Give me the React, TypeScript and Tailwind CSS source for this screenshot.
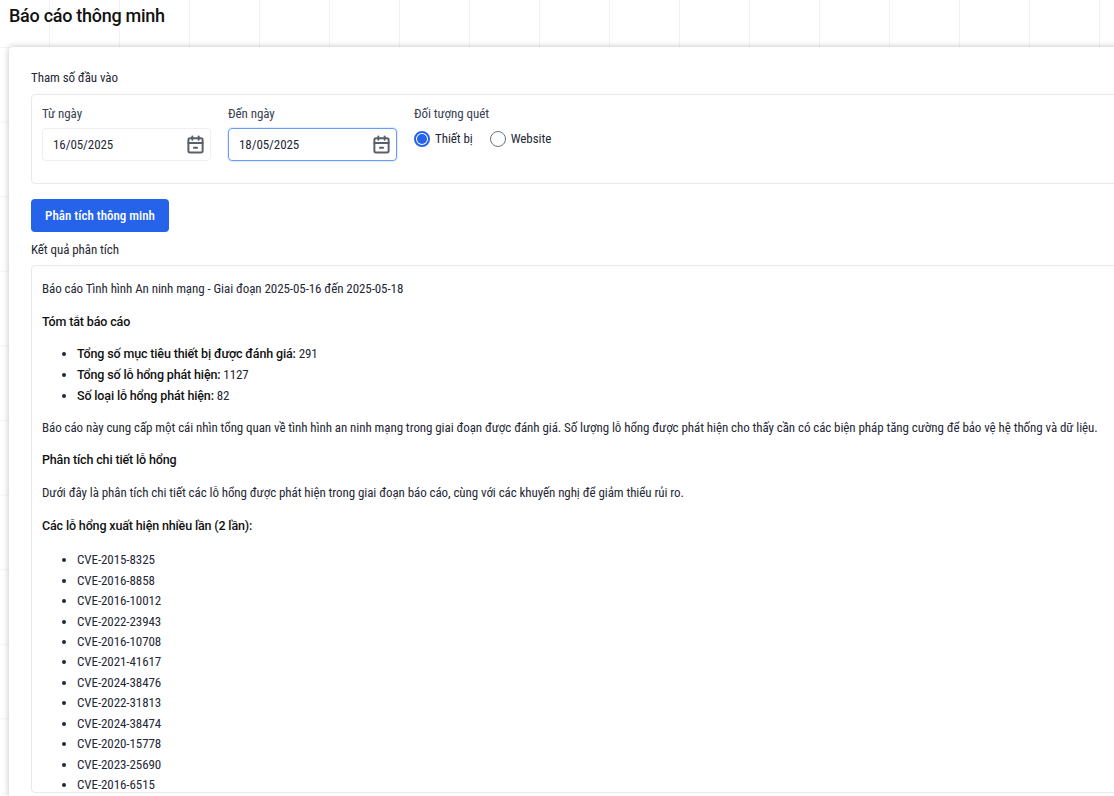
import { CalendarMinus2 } from "lucide-react"

const cves = [
  "CVE-2015-8325",
  "CVE-2016-8858",
  "CVE-2016-10012",
  "CVE-2022-23943",
  "CVE-2016-10708",
  "CVE-2021-41617",
  "CVE-2024-38476",
  "CVE-2022-31813",
  "CVE-2024-38474",
  "CVE-2020-15778",
  "CVE-2023-25690",
  "CVE-2016-6515",
]

function DateField({ label, value, focused }: { label: string; value: string; focused?: boolean }) {
  return (
    <div className="w-[169px]">
      <div className="h-[20px] leading-[20px] text-[#374151]">{label}</div>
      <div
        className={`mt-[4px] flex h-[33px] items-center justify-between rounded-[4px] border pl-[10px] pr-[5px] text-[#1f2937] ${
          focused ? "border-[#6b9cf5] shadow-[0_0_0_1px_rgba(147,184,250,0.25)]" : "border-[#eceef1]"
        }`}
      >
        <span>{value}</span>
        <CalendarMinus2 size={19} strokeWidth={2.5} className="text-[#5b6068]" />
      </div>
    </div>
  )
}

function Radio({ label, checked }: { label: string; checked?: boolean }) {
  return (
    <label className="flex items-center gap-[5px] text-[#1f2937]">
      {checked ? (
        <span className="flex h-[16px] w-[16px] items-center justify-center rounded-full border-[2px] border-[#2563eb]">
          <span className="h-[10px] w-[10px] rounded-full bg-[#2563eb]" />
        </span>
      ) : (
        <span className="h-[16px] w-[16px] rounded-full border-[1.5px] border-[#6b7280]" />
      )}
      {label}
    </label>
  )
}

function Strong({ children }: { children: string }) {
  return <strong className="text-[12.5px] font-medium tracking-[-0.15px] text-[#111] [font-stretch:100%]">{children}</strong>
}

export default function App() {
  return (
    <div className="flex h-screen flex-col overflow-hidden bg-white bg-[linear-gradient(to_right,#f1f2f4_1px,transparent_1px),linear-gradient(to_bottom,#f5f5f6_1px,transparent_1px)] bg-[length:70px_74.6px] bg-[position:49px_47px] font-['Roboto',sans-serif] text-[13px] tracking-[-0.08px] text-[#111827] [font-stretch:87.5%]">
      <h1 className="h-[47px] pl-[9px] pt-[3px] text-[18px] font-medium leading-[26px] tracking-[-0.28px] text-[#111] [font-stretch:100%]">
        Báo cáo thông minh
      </h1>
      <div className="ml-[9px] flex min-h-0 w-[1140px] flex-1 flex-col rounded-tl-[4px] bg-white pb-[3px] pl-[22px] pr-[20px] pt-[21px] shadow-[0_0_6px_rgba(0,0,0,0.25)]">
        <div className="h-[20px] leading-[20px] text-[#1f2937]">Tham số đầu vào</div>
        <div className="mt-[6px] flex h-[90px] gap-[17px] rounded-[4px] border border-[#e8e9eb] px-[10px] pt-[9px]">
          <DateField label="Từ ngày" value="16/05/2025" />
          <DateField label="Đến ngày" value="18/05/2025" focused />
          <div>
            <div className="h-[20px] leading-[20px] text-[#374151]">Đối tượng quét</div>
            <div className="mt-[5px] flex gap-[17px]">
              <Radio label="Thiết bị" checked />
              <Radio label="Website" />
            </div>
          </div>
        </div>
        <button
          type="button"
          className="mt-[15px] h-[33px] w-[138px] rounded-[4px] bg-[#2563eb] font-medium tracking-normal text-white"
        >
          Phân tích thông minh
        </button>
        <div className="mt-[8px] h-[20px] leading-[20px] text-[#1f2937]">Kết quả phân tích</div>
        <div className="mt-[5px] min-h-0 flex-1 overflow-hidden rounded-[4px] border border-[#e8e9eb] px-[10px] pt-[13px] leading-[20.4px] text-[#1f2937]">
          <p>Báo cáo Tình hình An ninh mạng - Giai đoạn 2025-05-16 đến 2025-05-18</p>
          <p className="mt-[13px]">
            <Strong>Tóm tắt báo cáo</Strong>
          </p>
          <ul className="mt-[10px] list-disc pl-[35px]">
            <li className="leading-[21px]">
              <Strong>Tổng số mục tiêu thiết bị được đánh giá:</Strong> 291
            </li>
            <li className="leading-[21px]">
              <Strong>Tổng số lỗ hổng phát hiện:</Strong> 1127
            </li>
            <li className="leading-[21px]">
              <Strong>Số loại lỗ hổng phát hiện:</Strong> 82
            </li>
          </ul>
          <p className="mt-[12px] whitespace-nowrap">
            Báo cáo này cung cấp một cái nhìn tổng quan về tình hình an ninh mạng trong giai đoạn được đánh giá. Số lượng lỗ hổng được phát hiện cho thấy cần có các biện pháp tăng cường để bảo vệ hệ thống và dữ liệu.
          </p>
          <p className="mt-[12px]">
            <Strong>Phân tích chi tiết lỗ hổng</Strong>
          </p>
          <p className="mt-[12px]">Dưới đây là phân tích chi tiết các lỗ hổng được phát hiện trong giai đoạn báo cáo, cùng với các khuyến nghị để giảm thiểu rủi ro.</p>
          <p className="mt-[13px]">
            <Strong>Các lỗ hổng xuất hiện nhiều lần (2 lần):</Strong>
          </p>
          <ul className="mt-[14px] list-disc pl-[35px]">
            {cves.map((cve) => (
              <li key={cve}>{cve}</li>
            ))}
          </ul>
        </div>
      </div>
    </div>
  )
}
